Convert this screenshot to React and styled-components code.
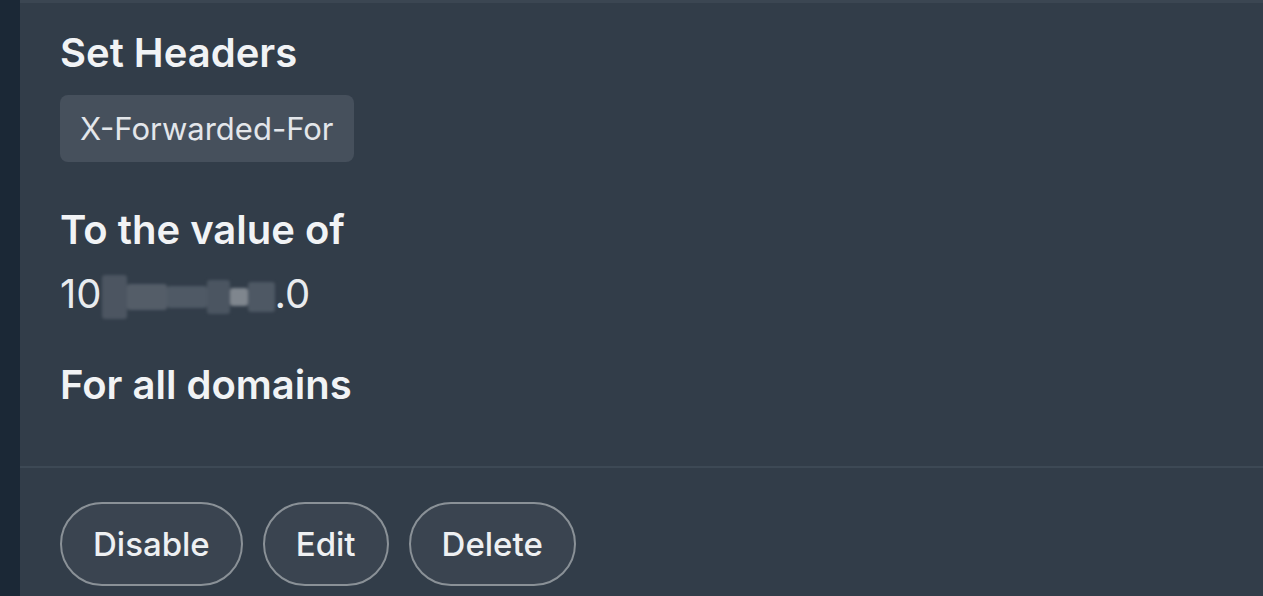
import React from 'react';
import styled, { createGlobalStyle } from 'styled-components';

const Global = createGlobalStyle`
  html, body {
    margin: 0;
    padding: 0;
    background: #323d49;
    font-family: Inter, "Noto Sans", sans-serif;
  }
`;

const Page = styled.div`
  display: flex;
  min-height: 596px;
  background: #1b2836;
`;

const Card = styled.div`
  flex: 1;
  margin-left: 20px;
  background: #323d49;
  border-top: 3px solid #3b4652;
  display: flex;
  flex-direction: column;
`;

const Body = styled.div`
  padding: 26px 40px 57px;
  display: flex;
  flex-direction: column;
`;

const Label = styled.div`
  color: #f1f3f5;
  font-size: 40px;
  font-weight: 600;
  line-height: 48px;
  margin-top: ${props => props.gap || 0}px;
`;

const Chip = styled.div`
  align-self: flex-start;
  margin-top: 18px;
  padding: 0 20px;
  height: 67px;
  display: flex;
  align-items: center;
  background: #46505c;
  border-radius: 8px;
  color: #e3e6ea;
  font-size: 31px;
`;

const Value = styled.div`
  display: flex;
  align-items: center;
  margin-top: 13px;
  color: #e8ebee;
  font-size: 40px;
  line-height: 48px;
`;

const Mosaic = styled.span`
  display: inline-flex;
  align-items: center;
  height: 48px;
  margin-top: 6px;
  filter: blur(1.5px);
`;

const Tile = styled.span`
  display: inline-block;
  width: ${props => props.w}px;
  height: ${props => props.h}px;
  background: ${props => props.c};
  border-radius: 3px;
`;

const Footer = styled.div`
  border-top: 2px solid #3d4955;
  padding: 34px 40px 0;
  display: flex;
  gap: 20px;
`;

const Button = styled.button`
  height: 84px;
  padding: 0 31px;
  border-radius: 42px;
  border: 2px solid #8a9197;
  background: #3a4450;
  color: #eef0f2;
  font-family: Inter, "Noto Sans", sans-serif;
  font-size: 33px;
  font-weight: 500;
`;

const tiles = [
  { w: 25, h: 44, c: '#4c5561' },
  { w: 40, h: 26, c: '#545d68' },
  { w: 40, h: 22, c: '#4f5965' },
  { w: 23, h: 34, c: '#4b5561' },
  { w: 18, h: 18, c: '#7f868e' },
  { w: 27, h: 30, c: '#4e5864' },
];

export default function App() {
  return (
    <Page>
      <Global />
      <Card>
        <Body>
          <Label>Set Headers</Label>
          <Chip>X-Forwarded-For</Chip>
          <Label gap={44}>To the value of</Label>
          <Value>
            10
            <Mosaic>
              {tiles.map((t, i) => (
                <Tile key={i} w={t.w} h={t.h} c={t.c} />
              ))}
            </Mosaic>
            .0
          </Value>
          <Label gap={40}>For all domains</Label>
        </Body>
        <Footer>
          <Button>Disable</Button>
          <Button>Edit</Button>
          <Button>Delete</Button>
        </Footer>
      </Card>
    </Page>
  );
}
